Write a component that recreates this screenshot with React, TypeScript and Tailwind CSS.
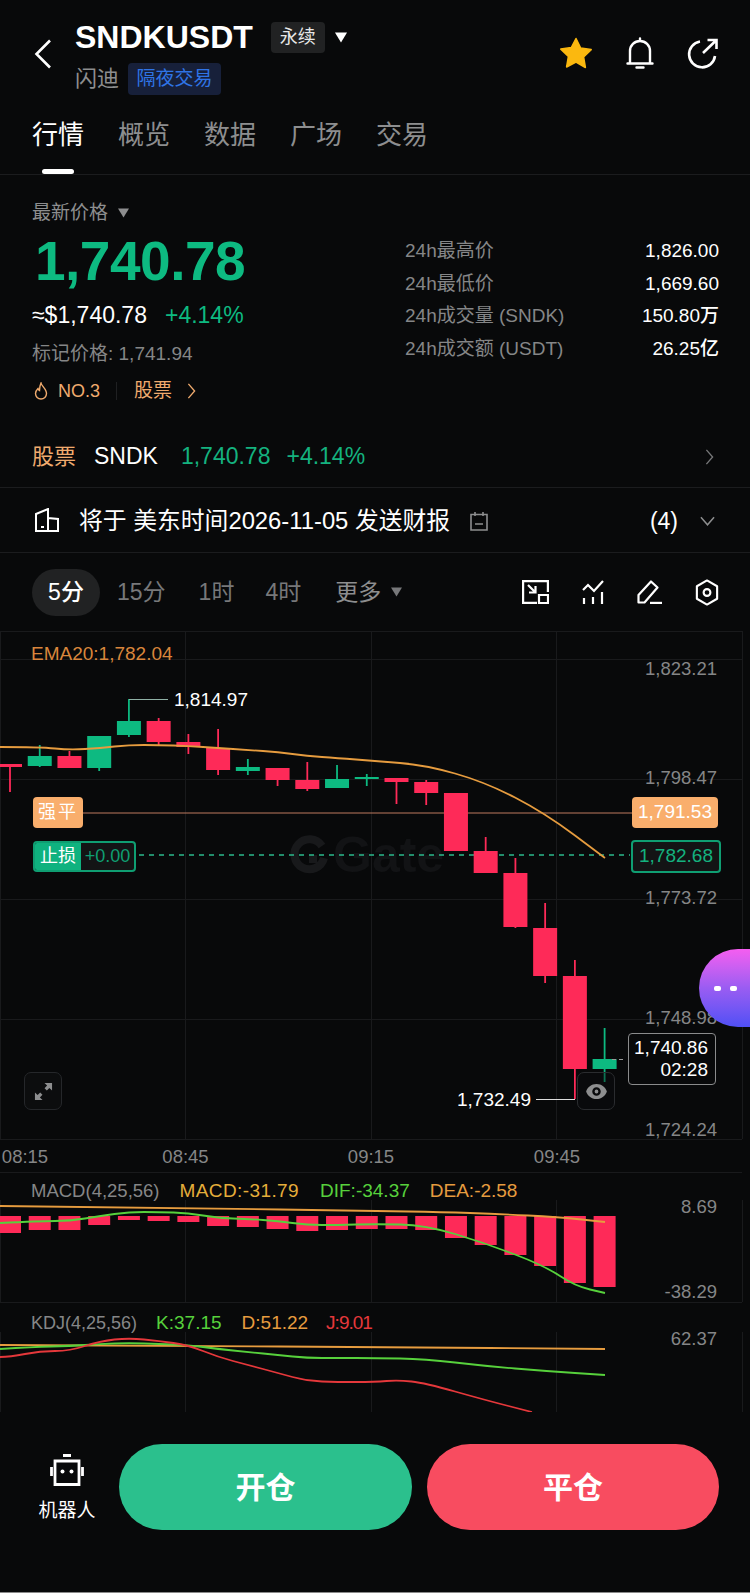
import { FC } from "react";

type Candle = [number, number, number, number, number]; // wick top, body top, body bottom, wick bottom, 1 = up

const GREEN = "#0dba81";
const RED = "#fe2a58";
const ORANGE = "#e69c3f";
const LIME = "#57d13c";

const candles: Candle[] = [
  [764, 764, 767, 792, 0],
  [745, 756, 766, 767, 1],
  [751, 756, 768, 768, 0],
  [736, 736, 768, 771, 1],
  [699, 721, 735, 737, 1],
  [718, 721, 742, 745, 0],
  [734, 742, 747, 754, 0],
  [729, 748, 770, 775, 0],
  [759, 767, 771, 775, 1],
  [768, 768, 780, 786, 0],
  [762, 780, 789, 791, 0],
  [765, 779, 788, 788, 1],
  [774, 777, 779, 786, 1],
  [778, 778, 782, 804, 0],
  [780, 782, 793, 805, 0],
  [793, 793, 851, 851, 0],
  [837, 851, 873, 873, 0],
  [858, 873, 927, 928, 0],
  [903, 928, 976, 983, 0],
  [960, 976, 1069, 1099, 0],
  [1028, 1059, 1069, 1082, 1],
];

const macdBars = [1233, 1230, 1230, 1225, 1220, 1221, 1222, 1226, 1227, 1229, 1231, 1230, 1229, 1229, 1230, 1238, 1245, 1255, 1266, 1283, 1287];

const ema = "0,747 40,747 70,750 100,748 129,745 159,745 188,746 218,748 248,750 278,752 307,756 337,758 375,761 425,765 485,782 545,813 605,858";
const dif = "0,1223 40,1221 70,1221 100,1216 129,1212 159,1212 188,1213 218,1218 248,1219 278,1221 307,1225 337,1225 375,1224 425,1225 485,1243 545,1266 575,1286 605,1293";
const dea = "0,1206 185,1208 375,1211 442,1212 498,1214 558,1217 605,1222";
const kdjD = "0,1345 185,1346 375,1347 605,1349";
const kdjK = "0,1349 33,1347 70,1346 100,1344 129,1343 159,1344 188,1345 218,1349 248,1352 278,1355 307,1358 337,1358 375,1358 425,1359 485,1366 545,1371 605,1375";
const kdjJ = "0,1357 10,1357 40,1351 70,1351 100,1341 129,1338 159,1341 188,1345 218,1357 248,1365 278,1373 307,1381 337,1382 375,1382 398,1380 425,1383 485,1400 532,1412";

const gridX = [0.5, 185.5, 371.5, 556.5, 742.5];

// rounds the corners of a polyline so the indicators don't look faceted
const smooth = (pts: string) => {
  const p = pts.split(" ").map((s) => s.split(",").map(Number));
  let d = `M${p[0][0]} ${p[0][1]}`;
  for (let i = 1; i < p.length - 1; i++) {
    const mx = (p[i][0] + p[i + 1][0]) / 2;
    const my = (p[i][1] + p[i + 1][1]) / 2;
    d += `Q${p[i][0]} ${p[i][1]} ${mx} ${my}`;
  }
  const last = p[p.length - 1];
  return `${d}L${last[0]} ${last[1]}`;
};

const ChartSvg: FC = () => (
  <svg viewBox="0 631 750 781" className="absolute inset-0 h-full w-full" fill="none">
    {/* grid */}
    {[631, 659, 779, 899, 1019, 1139, 1172, 1302, 1412].map((y) => (
      <line key={y} x1="0" x2="742" y1={y + 0.5} y2={y + 0.5} stroke="#191a1c" />
    ))}
    {gridX.map((x) => (
      <g key={x} stroke="#191a1c">
        <line x1={x} x2={x} y1="631" y2="1139" />
        <line x1={x} x2={x} y1="1200" y2="1302" />
        <line x1={x} x2={x} y1="1332" y2="1412" />
      </g>
    ))}

    {/* watermark */}
    <path d="M322 846a15 15 0 1 0 2 12" stroke="#18191b" strokeWidth="8" />
    <path d="M309 855h8v8h-8z" fill="#18191b" />
    <text x="333" y="872" fontFamily="'Liberation Sans', sans-serif" fontSize="50" fontWeight="700" fill="#121315">Gate</text>

    {/* liquidation and stop lines */}
    <line x1="83" x2="632" y1="813" y2="813" stroke="#bd7a5f" />
    <line x1="139" x2="630" y1="855" y2="855" stroke="#2bb98c" strokeWidth="1.500" strokeDasharray="5 5" />

    {/* candles */}
    {candles.map(([wt, bt, bb, wb, up], i) => {
      const cx = 10 + i * 29.73;
      const color = up ? GREEN : RED;
      return (
        <g key={i}>
          <line x1={cx} x2={cx} y1={wt} y2={wb} stroke={color} strokeWidth="1.800" />
          <rect x={cx - 12} y={bt} width="24" height={Math.max(bb - bt, 2)} fill={color} />
        </g>
      );
    })}
    <path d={smooth(ema)} stroke={ORANGE} strokeWidth="1.800" />

    {/* high and low markers */}
    <line x1="129" x2="168" y1="699.500" y2="699.500" stroke="#8fb0a5" />
    <line x1="536" x2="575" y1="1099.500" y2="1099.500" stroke="#dddddd" />
    <line x1="612" x2="623" y1="1059.500" y2="1059.500" stroke="#9a9a9a" strokeDasharray="4 3" />

    {/* macd */}
    {macdBars.map((b, i) => (
      <rect key={i} x={10 + i * 29.73 - 11} y="1216" width="22" height={b - 1216} fill={RED} />
    ))}
    <path d={smooth(dea)} stroke={ORANGE} strokeWidth="1.800" />
    <path d={smooth(dif)} stroke={LIME} strokeWidth="1.800" />

    {/* kdj */}
    <path d={smooth(kdjD)} stroke={ORANGE} strokeWidth="1.800" />
    <path d={smooth(kdjK)} stroke={LIME} strokeWidth="1.800" />
    <path d={smooth(kdjJ)} stroke="#e5383b" strokeWidth="1.800" />
  </svg>
);

const Axis: FC<{ y: number; children: string }> = ({ y, children }) => (
  <span className="absolute right-[33px] text-[18.500px] leading-[20px] text-[#858687]" style={{ top: y - 631 - 10 }}>
    {children}
  </span>
);

const TimeLabel: FC<{ x: number; children: string }> = ({ x, children }) => (
  <span className="absolute top-[516px] -translate-x-1/2 text-[18.500px] leading-[20px] text-[#858687]" style={{ left: x }}>
    {children}
  </span>
);

const Triangle: FC<{ className: string }> = ({ className }) => (
  <svg viewBox="0 0 12 10" className={className} fill="currentColor">
    <path d="M0.500 0.500h11L6 9.500z" />
  </svg>
);

const Chevron: FC<{ className: string }> = ({ className }) => (
  <svg viewBox="0 0 10 18" className={className} fill="none" stroke="currentColor" strokeWidth="1.500">
    <path d="M1.500 1l7 8-7 8" />
  </svg>
);

const Header: FC = () => (
  <header className="flex h-[105px] items-start pt-[22px]">
    <svg viewBox="0 0 18 30" className="ml-[34px] mt-[17px] h-[30px] w-[18px] shrink-0" fill="none" stroke="#fff" strokeWidth="2.600">
      <path d="M16 1.500L2.500 15 16 28.500" />
    </svg>
    <div className="ml-[23px] flex flex-col">
      <div className="flex h-[31px] items-center">
        <span className="text-[32px] font-bold leading-[31px] text-white">SNDKUSDT</span>
        <span className="ml-[18px] flex h-[31px] w-[54px] items-center justify-center rounded-[4px] bg-[#212223] text-[18px] text-[#e8e8e8]">永续</span>
        <Triangle className="ml-[9px] h-[11px] w-[14px] text-white" />
      </div>
      <div className="mt-[10px] flex h-[32px] items-center">
        <span className="text-[22px] leading-[32px] text-[#8d8e8f]">闪迪</span>
        <span className="ml-[9px] flex h-[32px] w-[93px] items-center justify-center rounded-[4px] bg-[#17203a] text-[19px] text-[#2f74e6]">隔夜交易</span>
      </div>
    </div>
    <div className="ml-auto mr-[31px] mt-[15px] flex items-center">
      <svg viewBox="0 0 34 32" className="h-[32px] w-[34px]">
        <path d="M17 1.500l4.700 9.600 10.500 1.500-7.600 7.400 1.800 10.500L17 25l-9.400 5 1.800-10.500-7.600-7.400 10.500-1.500z" fill="#fbb80f" stroke="#fbb80f" strokeLinejoin="round" strokeWidth="1.500" />
      </svg>
      <svg viewBox="0 0 28 32" className="ml-[33px] h-[32px] w-[28px]" fill="none" stroke="#fff" strokeWidth="2.400" strokeLinecap="round">
        <path d="M14 1.500v2.500M4 26V14a10 10 0 0 1 20 0v12M1.500 26.500h25M10.500 30.500h7" />
      </svg>
      <svg viewBox="0 0 32 32" className="ml-[33px] h-[32px] w-[32px]" fill="none" stroke="#fff" strokeWidth="2.600">
        <path d="M13 4.500A13 13 0 1 0 28 19" />
        <path d="M16 16L29 3.500M20.500 3h9v9" />
      </svg>
    </div>
  </header>
);

const tabs = ["行情", "概览", "数据", "广场", "交易"];

const Tabs: FC = () => (
  <nav className="relative flex h-[70px] gap-[34px] border-b border-[#1b1c1e] pl-[32px] pt-[15px]">
    {tabs.map((t, i) => (
      <span key={t} className={`text-[26px] leading-[30px] ${i === 0 ? "text-white" : "text-[#8d8e8f]"}`}>
        {t}
      </span>
    ))}
    <span className="absolute bottom-0 left-[42px] h-[5px] w-[32px] rounded-full bg-white" />
  </nav>
);

const stats: [string, string][] = [
  ["24h最高价", "1,826.00"],
  ["24h最低价", "1,669.60"],
  ["24h成交量 (SNDK)", "150.80万"],
  ["24h成交额 (USDT)", "26.25亿"],
];

const Summary: FC = () => (
  <section className="flex h-[241px] pl-[32px] pr-[31px] pt-[26px]">
    <div className="w-[373px] shrink-0">
      <div className="flex h-[24px] items-center text-[19px] text-[#8d8e8f]">
        最新价格
        <Triangle className="ml-[9px] h-[10px] w-[13px]" />
      </div>
      <div className="ml-[3px] mt-[4px] text-[55px] font-bold leading-[64px] tracking-[-0.5px] text-[#0dba81]">1,740.78</div>
      <div className="mt-[8px] flex h-[28px] items-center text-[23px]">
        <span className="font-medium text-white">≈$1,740.78</span>
        <span className="ml-[18px] text-[#0dba81]">+4.14%</span>
      </div>
      <div className="mt-[12px] text-[19px] leading-[26px] text-[#858687]">标记价格: 1,741.94</div>
      <div className="mt-[11px] flex h-[26px] items-center text-[18px] text-[#f0ab6e]">
        <svg viewBox="0 0 14 18" className="ml-[2px] h-[18px] w-[14px]" fill="none" stroke="currentColor" strokeWidth="1.400">
          <path d="M7 1c.5 3 5.500 6 5.500 10.500a5.500 5.500 0 0 1-11 0C1.500 9 3 7.500 4 6.500c.3 1 .8 1.700 1.500 2C5.500 6 6 3 7 1z" />
        </svg>
        <span className="ml-[10px] font-medium">NO.3</span>
        <span className="ml-[16px] h-[18px] w-px bg-[#1f2022]" />
        <span className="ml-[17px] text-[19px]">股票</span>
        <Chevron className="ml-[15px] h-[16px] w-[9px]" />
      </div>
    </div>
    <div className="mt-[34px] flex-1">
      {stats.map(([label, value]) => (
        <div key={label} className="flex h-[32.500px] items-center justify-between text-[19px]">
          <span className="text-[#858687]">{label}</span>
          <span className="font-medium text-white">{value}</span>
        </div>
      ))}
    </div>
  </section>
);

const StockRow: FC = () => (
  <div className="flex h-[72px] items-center border-b border-[#1b1c1e] pl-[32px] pr-[36px] pt-[10px] text-[23px]">
    <span className="text-[22px] text-[#f0ab6e]">股票</span>
    <span className="ml-[18px] font-medium text-white">SNDK</span>
    <span className="ml-[23px] text-[#14b27f]">1,740.78</span>
    <span className="ml-[16px] text-[#14b27f]">+4.14%</span>
    <Chevron className="ml-auto h-[16px] w-[9px] text-[#77787a]" />
  </div>
);

const EarningsRow: FC = () => (
  <div className="flex h-[65px] items-center border-b border-[#1b1c1e] pl-[35px] pr-[35px] pt-[2px]">
    <svg viewBox="0 0 24 24" className="mb-[2px] h-[24px] w-[24px]" fill="none" stroke="#fff" strokeWidth="2">
      <path d="M1 23V6l12-5v22zM1 23h22V11l-10-1" />
      <path d="M6 19h3" />
    </svg>
    <span className="ml-[20px] text-[23.800px] text-white">将于 美东时间2026-11-05 发送财报</span>
    <svg viewBox="0 0 18 20" className="ml-[20px] h-[20px] w-[18px]" fill="none" stroke="#8d8e8f" strokeWidth="1.600">
      <path d="M1 3.500h16V19H1zM5 1v4M13 1v4M5 13h8" />
    </svg>
    <span className="ml-auto text-[23px] text-white">(4)</span>
    <svg viewBox="0 0 16 10" className="ml-[22px] h-[10px] w-[15px]" fill="none" stroke="#8d8e8f" strokeWidth="1.600">
      <path d="M1 1l7 8 7-8" />
    </svg>
  </div>
);

const Timeframes: FC = () => (
  <div className="flex h-[78px] items-center pl-[32px] pr-[31px] text-[23px] text-[#77787a]">
    <span className="flex h-[47px] w-[68px] items-center justify-center rounded-[24px] bg-[#212223] font-medium text-white">5分</span>
    <span className="ml-[17px]">15分</span>
    <span className="ml-[33px]">1时</span>
    <span className="ml-[31px]">4时</span>
    <span className="ml-[34px] text-[#8d8e8f]">更多</span>
    <Triangle className="ml-[9px] h-[10px] w-[13px]" />
    <div className="ml-auto flex items-center gap-[33px]">
      <svg viewBox="0 0 27 24" className="h-[24px] w-[27px]" fill="none" stroke="#fff" strokeWidth="2.200">
        <path d="M15 22.900H1.100V1.100h24.800V12" />
        <path d="M6 5l7 7M13.500 6v6.500H7" />
        <path d="M17 15h9v8h-9z" />
      </svg>
      <svg viewBox="0 0 22 24" className="h-[24px] w-[22px]" fill="none" stroke="#fff" strokeWidth="2.200">
        <path d="M1 10l5-5 6 6 9-10" />
        <path d="M2 24v-6M11 24v-7M20 24V12" />
      </svg>
      <svg viewBox="0 0 25 24" className="h-[24px] w-[25px]" fill="none" stroke="#fff" strokeWidth="2.200" strokeLinejoin="round">
        <path d="M1.500 22.500V15L14 1.500l6.500 6L7.500 22.500z" />
        <path d="M13 22.900h12" />
      </svg>
      <svg viewBox="0 0 24 28" className="h-[27px] w-[24px]" fill="none" stroke="#fff" strokeWidth="2.200" strokeLinejoin="round">
        <path d="M12 1.500l10.500 6v13L12 26.500l-10.500-6v-13z" />
        <circle cx="12" cy="14" r="3.500" />
      </svg>
    </div>
  </div>
);

const Chart: FC = () => (
  <div className="relative h-[781px] w-full overflow-hidden font-['Liberation_Sans','Noto_Sans_CJK_SC',sans-serif]">
    <ChartSvg />

    <span className="absolute left-[31px] top-[13px] text-[19px] leading-[20px] text-[#d9863c]">EMA20:1,782.04</span>

    <Axis y={669}>1,823.21</Axis>
    <Axis y={778}>1,798.47</Axis>
    <Axis y={898}>1,773.72</Axis>
    <Axis y={1018}>1,748.98</Axis>
    <Axis y={1130}>1,724.24</Axis>

    <span className="absolute left-[174px] top-[59px] text-[19px] leading-[20px] text-white">1,814.97</span>
    <span className="absolute left-[457px] top-[459px] text-[19px] leading-[20px] text-white">1,732.49</span>

    <span className="absolute left-[33px] top-[166px] flex h-[31px] w-[50px] items-center justify-center rounded-[4px] bg-[#f9ae6c] text-[18px] tracking-[2px] text-white">强平</span>
    <span className="absolute left-[632px] top-[166px] flex h-[31px] w-[86px] items-center justify-center rounded-[4px] bg-[#f9ae6c] text-[19px] text-white">1,791.53</span>

    <div className="absolute left-[33px] top-[210px] flex h-[31px] w-[103px] items-stretch overflow-hidden rounded-[4px] border-2 border-[#0f9e72] bg-[#131415] text-[18px]">
      <span className="flex w-[46px] items-center justify-center bg-[#0fb27f] text-white">止损</span>
      <span className="flex flex-1 items-center justify-center text-[#0f9e72]">+0.00</span>
    </div>
    <span className="absolute left-[631px] top-[209px] flex h-[33px] w-[90px] items-center justify-center rounded-[4px] border-2 border-[#0f9e72] bg-[#131415] text-[19px] text-[#14b27f]">1,782.68</span>

    <div className="absolute left-[628px] top-[402px] flex h-[52px] w-[88px] flex-col items-end justify-center rounded-[4px] border border-[#8a8b8c] bg-[#08090a] pr-[7px] text-[19px] leading-[22px] text-white">
      <span>1,740.86</span>
      <span>02:28</span>
    </div>

    <div className="absolute left-[24px] top-[441px] flex h-[38px] w-[38px] items-center justify-center rounded-[7px] border border-[#25272a] bg-[#0c0d0e]">
      <svg viewBox="0 0 20 20" className="h-[19px] w-[19px]" fill="#8d8e8f">
        <path d="M11 1h8v8l-2.800-2.800-2.700 2.700-2.400-2.400 2.700-2.700zM9 19H1v-8l2.800 2.800 2.700-2.700 2.400 2.400-2.700 2.700z" />
      </svg>
    </div>
    <div className="absolute left-[577px] top-[441px] flex h-[38px] w-[38px] items-center justify-center rounded-[7px] border border-[#2a2c2f] bg-[#0c0d0e]/40">
      <svg viewBox="0 0 24 18" className="h-[17px] w-[23px]">
        <path fillRule="evenodd" d="M12 1C6.500 1 2.500 4.500 1 9c1.500 4.500 5.500 8 11 8s9.500-3.500 11-8c-1.500-4.500-5.500-8-11-8zm0 3.500a4.500 4.500 0 1 1 0 9 4.500 4.500 0 0 1 0-9zm0 2.500a2 2 0 1 0 0 4 2 2 0 0 0 0-4z" fill="#8d8e8f" />
      </svg>
    </div>

    {/* floating assistant */}
    <div className="absolute left-[699px] top-[318px] flex h-[78px] w-[51px] items-center gap-[9px] rounded-l-[39px] bg-gradient-to-b from-[#f55df0] via-[#9a5cf2] to-[#4f4ff5] pl-[15px]">
      <span className="h-[5px] w-[7px] rounded-[2px] bg-white" />
      <span className="h-[5px] w-[7px] rounded-[2px] bg-white" />
    </div>

    <TimeLabel x={25}>08:15</TimeLabel>
    <TimeLabel x={185.5}>08:45</TimeLabel>
    <TimeLabel x={371}>09:15</TimeLabel>
    <TimeLabel x={557}>09:45</TimeLabel>

    <div className="absolute left-[31px] top-[550px] flex text-[19px] leading-[20px]">
      <span className="text-[18.500px] text-[#858687]">MACD(4,25,56)</span>
      <span className="ml-[20px] tracking-[0.4px] text-[#e5ae3a]">MACD:-31.79</span>
      <span className="ml-[21px] text-[#57d13c]">DIF:-34.37</span>
      <span className="ml-[20px] text-[#e69c3f]">DEA:-2.58</span>
    </div>
    <Axis y={1207}>8.69</Axis>
    <Axis y={1292}>-38.29</Axis>

    <div className="absolute left-[31px] top-[682px] flex text-[19px] leading-[20px]">
      <span className="text-[18px] text-[#858687]">KDJ(4,25,56)</span>
      <span className="ml-[19px] text-[#57d13c]">K:37.15</span>
      <span className="ml-[20px] text-[#e69c3f]">D:51.22</span>
      <span className="ml-[18px] tracking-[-1px] text-[#e5383b]">J:9.01</span>
    </div>
    <Axis y={1339}>62.37</Axis>
  </div>
);

const BottomBar: FC = () => (
  <footer className="flex h-[180px] items-start pl-[39px] pr-[31px] pt-[32px]">
    <div className="flex w-[56px] flex-col items-center pt-[10px]">
      <svg viewBox="0 0 34 32" className="h-[32px] w-[34px]" fill="none" stroke="#fff" strokeWidth="2.800">
        <path d="M5 7h24v23.500H5zM13 1.500h8M1.500 13v9M32.500 13v9" />
        <circle cx="12.500" cy="17.500" r="2" fill="#fff" stroke="none" />
        <circle cx="21.500" cy="17.500" r="2" fill="#fff" stroke="none" />
      </svg>
      <span className="mt-[13px] whitespace-nowrap text-[19px] leading-[24px] text-white">机器人</span>
    </div>
    <button className="ml-[24px] h-[86px] w-[293px] rounded-[43px] bg-[#2bc08d] text-[30px] font-bold text-white">开仓</button>
    <button className="ml-[15px] h-[86px] w-[292px] rounded-[43px] bg-[#f84c60] text-[30px] font-bold text-white">平仓</button>
  </footer>
);

export default function App() {
  return (
    <div className="h-[1593px] w-[750px] overflow-hidden bg-[#08090a] font-['Liberation_Sans','Noto_Sans_CJK_SC',sans-serif]">
      <Header />
      <Tabs />
      <Summary />
      <StockRow />
      <EarningsRow />
      <Timeframes />
      <Chart />
      <BottomBar />
      <div className="h-px bg-[#8a8a8a]" />
    </div>
  );
}
